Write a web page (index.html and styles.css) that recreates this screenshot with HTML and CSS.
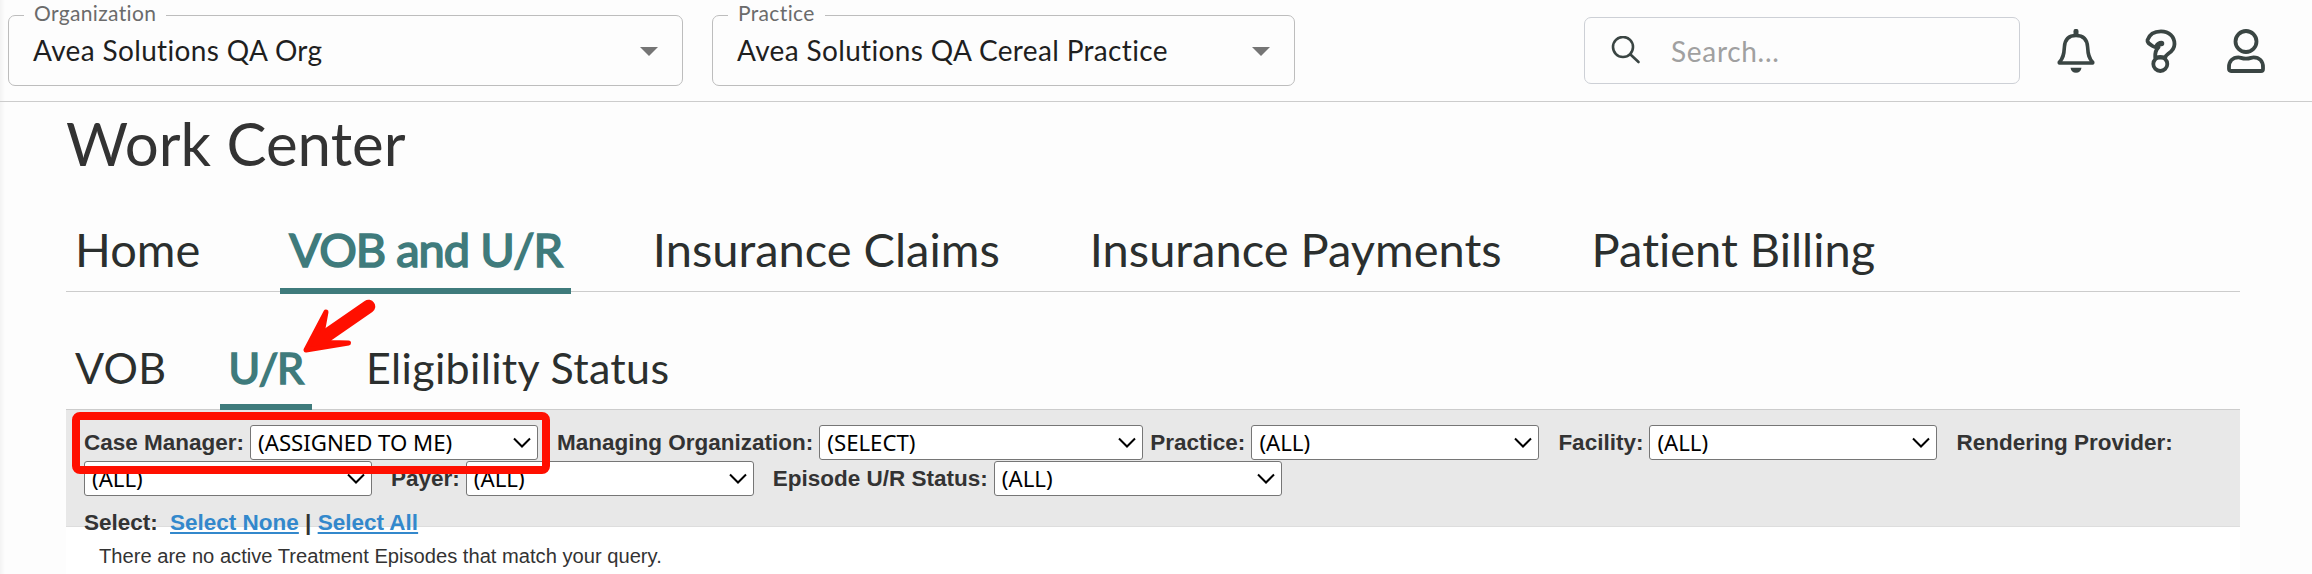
FILE: index.html
```
<!DOCTYPE html>
<html lang="en">
<head>
    <meta charset="UTF-8">
    <meta name="viewport" content="width=device-width, initial-scale=1.0">
    <title>Work Center</title>
    <link rel="stylesheet" href="styles.css">
</head>
<body>
    <svg class="defs" width="0" height="0">
        <symbol id="chevron" viewBox="0 0 18 11">
            <path d="M1 1.5 9 9.5 17 1.5" fill="none" stroke="#000" stroke-width="2"/>
        </symbol>
    </svg>

    <header>
        <fieldset class="picker org">
            <legend>Organization</legend>
            <span>Avea Solutions QA Org</span>
            <i class="caret"></i>
        </fieldset>
        <fieldset class="picker practice">
            <legend>Practice</legend>
            <span>Avea Solutions QA Cereal Practice</span>
            <i class="caret"></i>
        </fieldset>

        <div class="search">
            <svg width="30" height="30" viewBox="0 0 30 30" fill="none" stroke="#3a4543" stroke-width="2.6" stroke-linecap="round">
                <circle cx="12" cy="11" r="10"/>
                <path d="M19.5 18.5 27.5 26"/>
            </svg>
            <span>Search...</span>
        </div>

        <div class="icons">
            <svg width="38" height="44" viewBox="0 0 38 44" fill="none" stroke="#3a4543" stroke-width="3.6" stroke-linejoin="round" stroke-linecap="round">
                <path d="M19 2.3V5" stroke-width="5"/>
                <path d="M19 6.5C11.5 6.5 7.8 11 7.4 18C7 26 6 29.5 2.3 33.2V34H35.7V33.2C32 29.5 31 26 30.6 18C30.2 11 26.5 6.5 19 6.5Z"/>
                <path d="M13.5 38.8H24.5C24 42 22 43.8 19 43.8S14 42 13.5 38.8Z" fill="#3a4543" stroke="none"/>
            </svg>
            <svg width="32" height="44" viewBox="0 0 32 44" fill="none" stroke="#3a4543" stroke-width="3.8" stroke-linejoin="round">
                <path d="M2.5 11C4.5 5 9.5 2.3 16 2.3C24 2.3 29.5 7.5 29.5 15C29.5 20 26.5 22.5 23.5 24.5C21.5 26 20.5 26.8 20.3 28.5H10.2C10 24 11 20.5 13.5 18.3C11 18.8 9.5 18.3 7.5 17C4 14.8 2 13.5 2.5 11Z"/>
                <path d="M12 17.5C13 15.5 14.5 14.5 16.5 14.5" stroke-width="5.5" stroke-linecap="round"/>
                <circle cx="15.3" cy="35" r="7"/>
            </svg>
            <svg width="38" height="44" viewBox="0 0 38 44" fill="none" stroke="#3a4543" stroke-width="3.8" stroke-linejoin="round">
                <circle cx="19" cy="12.5" r="10.5"/>
                <path d="M11.5 28.3C13.5 28.3 15 29.7 19 29.7S24.5 28.3 26.5 28.3C32.5 28.3 36 32.5 36 38V40Q36 42 34 42H4Q2 42 2 40V38C2 32.5 5.5 28.3 11.5 28.3Z"/>
            </svg>
        </div>
    </header>

    <main>
        <h1>Work Center</h1>
        <nav class="tabs">
            <a>Home</a>
            <a class="active">VOB and U/R</a>
            <a>Insurance Claims</a>
            <a>Insurance Payments</a>
            <a>Patient Billing</a>
        </nav>
        <nav class="tabs sub-tabs">
            <a>VOB</a>
            <a class="active">U/R</a>
            <a>Eligibility Status</a>
        </nav>

        <section class="filters">
            <div class="row">
                <label class="case-manager">Case Manager:</label>
                <div class="select">(ASSIGNED TO ME)<svg><use href="#chevron"/></svg></div>
                <label>Managing Organization:</label>
                <div class="select wide">(SELECT)<svg><use href="#chevron"/></svg></div>
                <label class="near">Practice:</label>
                <div class="select">(ALL)<svg><use href="#chevron"/></svg></div>
                <label>Facility:</label>
                <div class="select">(ALL)<svg><use href="#chevron"/></svg></div>
                <label>Rendering Provider:</label>
            </div>
            <div class="row">
                <div class="select">(ALL)<svg><use href="#chevron"/></svg></div>
                <label>Payer:</label>
                <div class="select">(ALL)<svg><use href="#chevron"/></svg></div>
                <label>Episode U/R Status:</label>
                <div class="select">(ALL)<svg><use href="#chevron"/></svg></div>
            </div>
            <div class="links">Select: <a class="none">Select None</a> | <a>Select All</a></div>
        </section>
        <p class="empty">There are no active Treatment Episodes that match your query.</p>
    </main>

    <!-- callouts -->
    <div class="highlight"></div>
    <svg class="arrow" width="76" height="58" viewBox="0 0 76 58" fill="#ff0f00" stroke="#ff0f00" stroke-linecap="round" stroke-linejoin="round">
        <path d="M67.5 8.5 27 36.5" stroke-width="13.5"/>
        <path d="M5 52 25 14 21.5 33 29 44.5 47.5 45Z" stroke-width="5"/>
    </svg>
</body>
</html>
```
FILE: styles.css
```
* {
    box-sizing: border-box;
}
body {
    margin: 0;
    height: 574px;
    overflow: hidden;
    position: relative;
    font-family: Lato, sans-serif;
    font-variant-ligatures: none;
    color: #2b2f2e;
    background: linear-gradient(to right, #f3f3f3, #fdfdfd 5px);
}
.defs {
    position: absolute;
}
header {
    display: flex;
    height: 102px;
    padding-left: 8px;
    border-bottom: 1px solid #ccc;
    letter-spacing: 0.35px;
}
.picker {
    display: flex;
    justify-content: space-between;
    align-items: center;
    height: 86px;
    margin: 0 29px 0 0;
    padding: 0 24px 15px;
    border: 1px solid #bdbdbd;
    border-radius: 7px;
    font-size: 28px;
    color: #1f1f1f;
}
.picker legend {
    margin-left: -9px;
    padding: 0 10px;
    font-size: 21px;
    line-height: 26px;
    height: 30px;
    color: #6b6b6b;
}
.org {
    width: 675px;
}
.practice {
    width: 583px;
}
.caret {
    margin-top: 2px;
    border: 9px solid transparent;
    border-top-color: #757575;
    border-bottom: 0;
}
.search {
    display: flex;
    align-items: center;
    gap: 30px;
    width: 436px;
    height: 67px;
    margin: 17px 0 0 260px;
    padding-left: 26px;
    border: 1px solid #cdd0d6;
    border-radius: 7px;
    font-size: 28px;
    letter-spacing: 0.7px;
    color: #a0a0a0;
}
.icons {
    display: flex;
    gap: 50px;
    margin: 29px 0 0 37px;
}
main {
    width: 2174px;
    margin-left: 66px;
}
h1 {
    margin: 0;
    padding-top: 7px;
    height: 107px;
    font-size: 60px;
    line-height: 69px;
    font-weight: 400;
    color: #333;
}
.tabs {
    display: flex;
    gap: 72px;
    height: 83px;
    border-bottom: 1px solid #ccc;
    font-size: 47px;
    line-height: 81px;
}
.tabs a {
    height: 85px;
    padding: 0 9px;
}
/* heavier stroke keeps the tab narrow when selected */
.tabs .active {
    margin: 0 1px 0 -1px;
    color: #3f7b7c;
    letter-spacing: -1px;
    -webkit-text-stroke: 1.7px #3f7b7c;
    border-bottom: 6px solid #3f7b7c;
}
.sub-tabs {
    gap: 48px;
    height: 118px;
    padding-top: 33px;
    font-size: 43px;
    letter-spacing: 0.35px;
}
.sub-tabs a {
    height: 85px;
    line-height: 86px;
}
.sub-tabs .active {
    margin: 0 -3px 0 -4px;
}
.filters {
    height: 117px;
    padding: 15px 0 0 18px;
    background: #e8e8e8;
    border-bottom: 1px solid #ddd;
    font: bold 22.5px/35px "Liberation Sans", sans-serif;
    color: #333;
    position: relative;
}
.row {
    display: flex;
    margin-bottom: 1px;
}
.row label {
    margin: 0 6px 0 19px;
    white-space: nowrap;
}
.row .case-manager {
    margin-left: 0;
}
.row .near {
    margin-left: 7px;
}
.select {
    display: flex;
    justify-content: space-between;
    align-items: center;
    width: 288px;
    height: 35px;
    padding: 0 6px 1px 7px;
    background: #fff;
    border: 1px solid #767676;
    border-radius: 3px;
    font: 22.2px "Noto Sans", sans-serif;
    color: #000;
}
.select svg {
    width: 18px;
    height: 11px;
}
.wide {
    width: 324px;
}
.links {
    margin-top: 9px;
}
.links a {
    color: #3388cc;
    text-decoration: underline;
}
.links .none {
    margin-left: 6px;
}
.empty {
    margin: 0;
    height: 48px;
    padding: 13px 0 0 33px;
    background: #fff;
    font: 20.15px/32px "Liberation Sans", sans-serif;
    color: #333;
}
.highlight {
    position: absolute;
    left: 72px;
    top: 412px;
    width: 478px;
    height: 62px;
    border: 8px solid #ff0f00;
    border-radius: 8px;
}
.arrow {
    position: absolute;
    left: 301px;
    top: 298px;
}
```
